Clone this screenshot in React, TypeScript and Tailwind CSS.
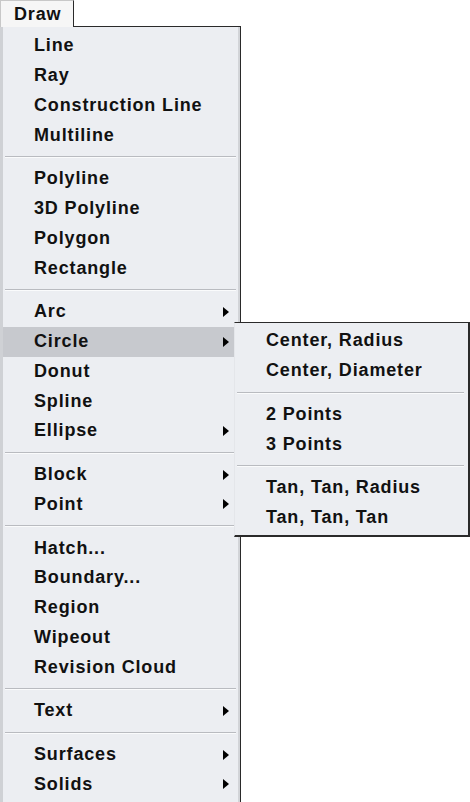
type Item = { label: string; sub?: boolean; active?: boolean } | "sep";

const mainItems: Item[] = [
  { label: "Line" },
  { label: "Ray" },
  { label: "Construction Line" },
  { label: "Multiline" },
  "sep",
  { label: "Polyline" },
  { label: "3D Polyline" },
  { label: "Polygon" },
  { label: "Rectangle" },
  "sep",
  { label: "Arc", sub: true },
  { label: "Circle", sub: true, active: true },
  { label: "Donut" },
  { label: "Spline" },
  { label: "Ellipse", sub: true },
  "sep",
  { label: "Block", sub: true },
  { label: "Point", sub: true },
  "sep",
  { label: "Hatch..." },
  { label: "Boundary..." },
  { label: "Region" },
  { label: "Wipeout" },
  { label: "Revision Cloud" },
  "sep",
  { label: "Text", sub: true },
  "sep",
  { label: "Surfaces", sub: true },
  { label: "Solids", sub: true },
];

const circleItems: Item[] = [
  { label: "Center, Radius" },
  { label: "Center, Diameter" },
  "sep",
  { label: "2 Points" },
  { label: "3 Points" },
  "sep",
  { label: "Tan, Tan, Radius" },
  { label: "Tan, Tan, Tan" },
];

const Arrow = () => (
  <svg width="6" height="10" viewBox="0 0 6 10" className="shrink-0">
    <path d="M0 0 L6 5 L0 10 Z" fill="#000" />
  </svg>
);

const Separator = () => (
  <div className="h-[14px] flex flex-col justify-center px-[2px]">
    <div className="h-[1px] bg-[#b9bbc0]" />
    <div className="h-[1px] bg-[#fafbfc]" />
  </div>
);

const MenuList = ({ items, pad }: { items: Item[]; pad: string }) => (
  <div className="flex flex-col">
    {items.map((it, i) =>
      it === "sep" ? (
        <Separator key={i} />
      ) : (
        <div
          key={i}
          className={`h-[29.75px] flex items-center justify-between pr-[9px] ${pad} ${
            it.active ? "bg-[#c7c9ce]" : ""
          }`}
        >
          <span>{it.label}</span>
          {it.sub && <Arrow />}
        </div>
      )
    )}
  </div>
);

export default function App() {
  return (
    <div
      className="relative w-[470px] h-[802px] overflow-hidden bg-white text-[18px] font-bold tracking-[0.85px] text-[#111]"
      style={{ fontFamily: '"Liberation Sans", Arial, sans-serif' }}
    >
      {/* menu bar tab */}
      <div className="flex">
        <div className="w-[74px] h-[27px] bg-[#f6f6f6] border-t border-l border-[#c8c8c8] border-r border-r-[#2a2a2a] pl-[13px] pt-[2px] leading-[22px]">
          Draw
        </div>
      </div>

      {/* dropdown */}
      <div className="w-[241px] bg-[#eceef2] border-l-[3px] border-l-[#cfd1d5] border-r border-r-[#2a2a2a] border-t border-t-[#2a2a2a] -mt-[1px]">
        <div className="border-r-2 border-r-[#d2d4d8] pt-[4px] pb-[40px]">
          <MenuList items={mainItems} pad="pl-[31px]" />
        </div>
      </div>

      {/* Circle submenu */}
      <div className="absolute left-[234px] top-[322px] w-[236px] h-[215px] bg-[#eceef2] border-t border-t-[#2a2a2a] border-r-2 border-r-[#2a2a2a] border-b-2 border-b-[#2a2a2a] border-l border-l-[#e4e6ea] pt-[3px] pr-[2px]">
        <MenuList items={circleItems} pad="pl-[31px]" />
      </div>
    </div>
  );
}
